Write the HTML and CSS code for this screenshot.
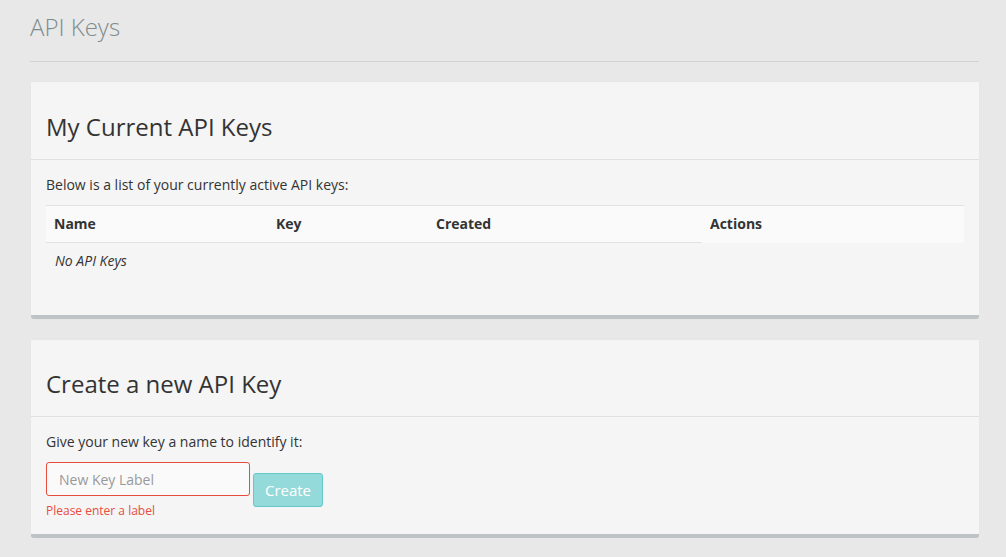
FILE: index.html
```html
<!DOCTYPE html>
<html>
<head>
<meta charset="utf-8">
<link rel="stylesheet" href="styles.css">
</head>
<body>
<div class="page">
  <h1 class="page-title">API Keys</h1>
  <hr class="page-rule">

  <section class="panel">
    <div class="panel-head"><h2>My Current API Keys</h2></div>
    <div class="panel-body">
      <p class="intro">Below is a list of your currently active API keys:</p>
      <table class="keys">
        <thead>
          <tr>
            <th class="c-name">Name</th>
            <th class="c-key">Key</th>
            <th class="c-created">Created</th>
            <th class="c-actions">Actions</th>
          </tr>
        </thead>
        <tbody>
          <tr><td class="empty" colspan="4">No API Keys</td></tr>
        </tbody>
      </table>
    </div>
  </section>

  <section class="panel panel-create">
    <div class="panel-head"><h2>Create a new API Key</h2></div>
    <div class="panel-body">
      <p class="intro">Give your new key a name to identify it:</p>
      <div class="form-row">
        <div class="field">
          <input class="label-input" type="text" placeholder="New Key Label">
          <div class="error">Please enter a label</div>
        </div>
        <button class="create-btn" disabled>Create</button>
      </div>
    </div>
  </section>
</div>
</body>
</html>
```

FILE: styles.css
```css
html, body {
  margin: 0;
  padding: 0;
  background: #e8e8e8;
  font-family: "Open Sans", "Liberation Sans", sans-serif;
  color: #333;
}
.page {
  padding: 14px 27px 0 30px;
}
.page-title {
  margin: 0;
  font-size: 24px;
  line-height: 26px;
  font-weight: 300;
  color: #7f8c8d;
}
.page-rule {
  margin: 21px 0 0 0;
  border: 0;
  border-top: 1px solid #d2d2d2;
  height: 0;
}
.panel {
  margin: 20px 0 0 1px;
  background: #f5f5f5;
  border-bottom: 4px solid #bec3c6;
  border-radius: 0 0 3px 3px;
  box-shadow: 0 0 1px rgba(0,0,0,0.08);
}
.panel-create {
  margin-top: 21px;
}
.panel-head {
  height: 78px;
  box-sizing: border-box;
  padding: 32px 15px 0 15px;
  border-bottom: 1px solid #e0e0e0;
}
.panel-create .panel-head {
  height: 77px;
  padding-top: 31px;
}
.panel-head h2 {
  margin: 0;
  font-size: 24px;
  line-height: 26px;
  font-weight: 400;
  color: #333;
}
.panel-body {
  padding: 15px 15px 15px 15px;
}
.intro {
  margin: 0 0 10px 0;
  font-size: 14px;
  line-height: 20px;
}
.keys {
  width: 100%;
  border-collapse: collapse;
  font-size: 14px;
  line-height: 20px;
  margin-bottom: 21px;
}
.keys th {
  text-align: left;
  font-weight: 700;
  padding: 8px;
  background: #fafafa;
  border-top: 1px solid #e2e2e2;
  border-bottom: 1px solid #e2e2e2;
}
.keys th.c-actions {
  border-bottom-color: #fafafa;
}
.c-name { width: 206px; }
.c-key { width: 144px; }
.c-created { width: 258px; }
.keys td {
  padding: 8px 9px;
}
.empty {
  font-style: italic;
}
.form-row {
  display: flex;
  align-items: flex-start;
  gap: 3px;
  margin-top: 10px;
}
.field {
  display: flex;
  flex-direction: column;
}
.label-input {
  width: 204px;
  height: 34px;
  box-sizing: border-box;
  border: 1px solid #e74c3c;
  border-radius: 3px;
  background: #fafafa;
  padding: 0 12px;
  font-family: inherit;
  font-size: 14px;
  color: #333;
  outline: none;
}
.label-input::placeholder {
  color: #999;
}
.error {
  margin-top: 6px;
  font-size: 12px;
  line-height: 17px;
  color: #e74c3c;
}
.create-btn {
  margin-top: 11px;
  width: 70px;
  height: 34px;
  box-sizing: border-box;
  background: #95dada;
  border: 1px solid #62c8c8;
  border-radius: 3px;
  color: #fff;
  font-family: inherit;
  font-size: 15px;
  padding: 0;
}
```
